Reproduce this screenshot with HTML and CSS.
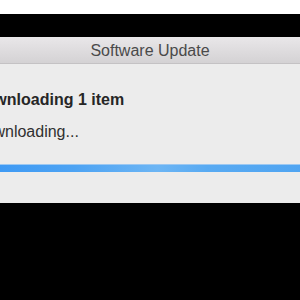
FILE: index.html
```html
<!DOCTYPE html>
<html>
<head>
<meta charset="utf-8">
<link rel="stylesheet" href="styles.css">
</head>
<body>
<div class="top-strip"></div>
<div class="desk">
  <div class="window">
    <div class="titlebar">Software Update</div>
    <div class="content">
      <div class="heading">Downloading 1 item</div>
      <div class="status">Downloading...</div>
      <div class="progress"><div class="progress-fill"></div></div>
    </div>
  </div>
</div>
</body>
</html>
```
FILE: styles.css
```css
html, body {
  margin: 0;
  padding: 0;
  width: 300px;
  height: 300px;
  overflow: hidden;
  background: #000;
  font-family: "Liberation Sans", Arial, sans-serif;
}
.top-strip {
  height: 14px;
  background: #fff;
}
.desk {
  padding-top: 23px;
  overflow: hidden;
}
.window {
  width: 380px;
  margin-left: -40px;
  background: #ececec;
}
.titlebar {
  height: 26px;
  line-height: 27px;
  text-align: center;
  font-size: 16px;
  color: #4a4a4a;
  background: linear-gradient(#e9e7e9, #d4d2d4);
  border-bottom: 1px solid #c4c2c4;
}
.content {
  height: 139px;
  padding: 26px 0 0 13px;
  box-sizing: border-box;
}
.heading {
  font-size: 16px;
  font-weight: bold;
  line-height: 20px;
  color: #262626;
}
.status {
  margin-top: 12px;
  font-size: 16px;
  line-height: 20px;
  color: #303030;
}
.progress {
  margin-top: 22px;
  margin-left: -13px;
  height: 8px;
  background: #3a97f4;
}
.progress-fill {
  height: 8px;
  box-sizing: border-box;
  border-top: 1px solid #9cc8f2;
  background: linear-gradient(90deg, #3795f4 0%, #4da3f3 30%, #6cb5f4 52%, #58aaf2 65%, #4ca2f1 100%);
}
```
